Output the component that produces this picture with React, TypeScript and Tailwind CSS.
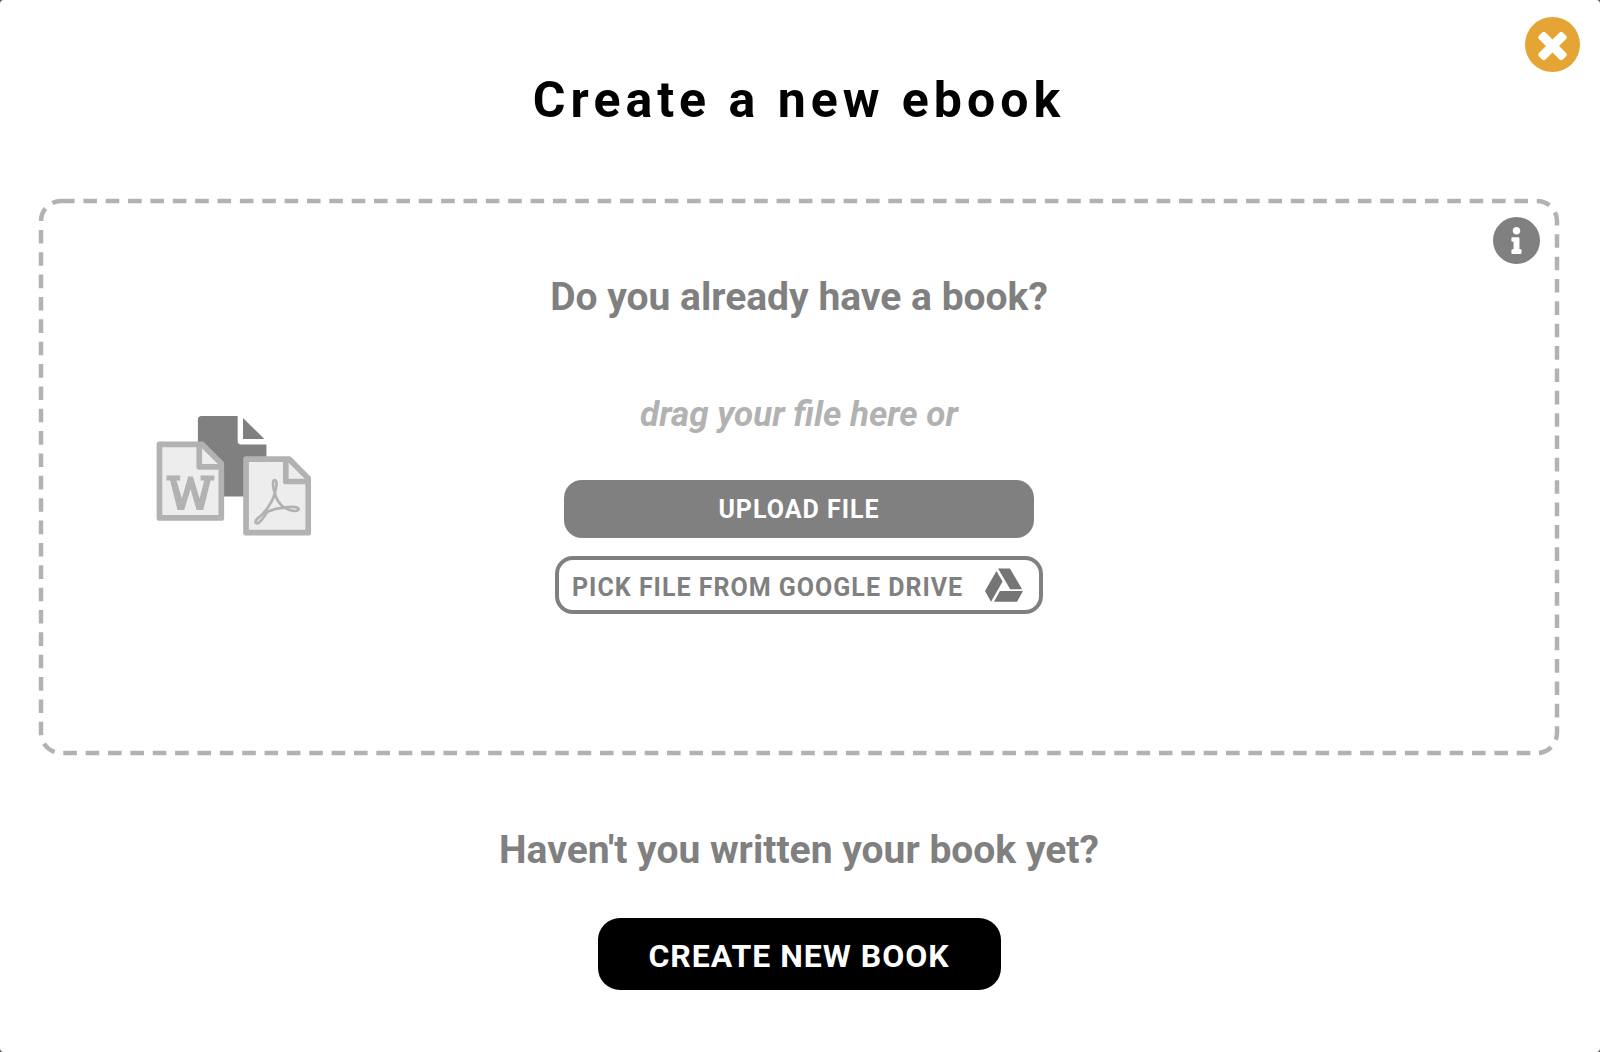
import { FaGoogleDrive, FaInfo } from "react-icons/fa";

const CloseIcon = () => (
  <svg viewBox="0 0 1792 1792" className="size-[43px]" fill="currentColor" aria-hidden="true">
    <path d="M1490 1322q0 40-28 68l-136 136q-28 28-68 28t-68-28l-294-294-294 294q-28 28-68 28t-68-28l-136-136q-28-28-28-68t28-68l294-294-294-294q-28-28-28-68t28-68l136-136q28-28 68-28t68 28l294 294 294-294q28-28 68-28t68 28l136 136q28 28 28 68t-28 68l-294 294 294 294q28 28 28 68z" />
  </svg>
);

const FilesIcon = () => (
  <svg viewBox="48 46 466 362" className="h-[121px] w-[156px]" aria-hidden="true">
    <path d="M184 49H292V124Q292 134 302 134H378V290H184Q173 290 173 279V60Q173 49 184 49Z" fill="#808080" />
    <path d="M308 55L372 118H308Z" fill="#808080" />
    <g stroke="#b2b2b2" strokeWidth="17" strokeLinejoin="round">
      <path d="M58 134H186L243 191V354H58Z" fill="#ededed" />
      <path d="M177 136V201H243" fill="none" />
      <path d="M317 178H446L503 235V398H317Z" fill="#ededed" />
      <path d="M436 180V245H503" fill="none" />
    </g>
    <path
      d="M79 227H120V242H109L125 296L144 230H158L178 296L192 242H181V227H222V242H211L189 330H169L151 268L132 330H112L90 242H79Z"
      fill="#b2b2b2"
    />
    <path
      d="M403 241C395 240 397 262 403 279C397 307 371 342 351 356C343 363 344 374 354 369C367 360 374 343 382 335C397 328 418 324 431 323C447 331 466 336 473 330C479 321 456 319 431 323C417 313 407 297 403 279C409 262 411 242 403 241Z"
      fill="none"
      stroke="#b2b2b2"
      strokeWidth="8"
      strokeLinejoin="round"
    />
  </svg>
);

const DashedOutline = () => (
  <svg className="pointer-events-none absolute inset-0 h-full w-full overflow-visible" aria-hidden="true">
    <rect
      width="100%"
      height="100%"
      rx="20"
      fill="none"
      stroke="#b2b2b2"
      strokeWidth="4.5"
      strokeDasharray="13.6 8.76"
    />
  </svg>
);

const App = () => {
  return (
    <div className="min-h-screen bg-[#555555] font-['Roboto',sans-serif] font-bold">
      <main className="relative flex min-h-screen flex-col items-center rounded-[4px] bg-white pt-[70px] pr-[43px] pb-[62px] pl-[41px]">
        <button
          type="button"
          aria-label="Close"
          className="absolute top-[17px] right-5 flex size-[55px] items-center justify-center rounded-full bg-[#e5a535] text-white"
        >
          <CloseIcon />
        </button>

        <h1 className="text-[50px] leading-[60px] tracking-[5px] text-black">Create a new ebook</h1>

        <section className="relative mt-[71px] grid w-full grid-cols-[1fr_2fr_1fr] items-center">
          <DashedOutline />
          <button
            type="button"
            aria-label="Information"
            className="absolute top-4 right-[17px] flex size-[47px] items-center justify-center rounded-full bg-[#808080] text-white"
          >
            <FaInfo className="size-[27px]" />
          </button>

          <div className="flex justify-center pb-1 pl-[6px]">
            <FilesIcon />
          </div>

          <div className="flex flex-col items-center pt-[72px] pb-[139px]">
            <h2 className="text-[39px] leading-[48px] text-[#808080]">Do you already have a book?</h2>
            <p className="mt-[72px] text-[35px] leading-[44px] text-[#b2b2b2] italic">drag your file here or</p>
            <button
              type="button"
              className="mt-[43px] h-[58px] w-[470px] rounded-[18px] bg-[#808080] pt-[2px] text-[25px] tracking-[1px] text-white"
            >
              UPLOAD FILE
            </button>
            <button
              type="button"
              className="mt-[18px] flex h-[58px] w-[488px] items-center justify-between rounded-[18px] border-4 border-[#808080] pr-4 pl-[13px] text-[25px] tracking-[1px] whitespace-nowrap text-[#808080]"
            >
              <span className="pt-[6px]">PICK FILE FROM GOOGLE DRIVE</span>
              <FaGoogleDrive className="size-[38px] text-[#757575]" />
            </button>
          </div>
        </section>

        <h2 className="mt-[73px] text-[39px] leading-[48px] text-[#808080]">Haven't you written your book yet?</h2>
        <button
          type="button"
          className="mt-[44px] h-[72px] w-[403px] rounded-[22px] bg-black pt-1 text-[32px] tracking-[1px] text-white"
        >
          CREATE NEW BOOK
        </button>
      </main>
    </div>
  );
};

export default App;
